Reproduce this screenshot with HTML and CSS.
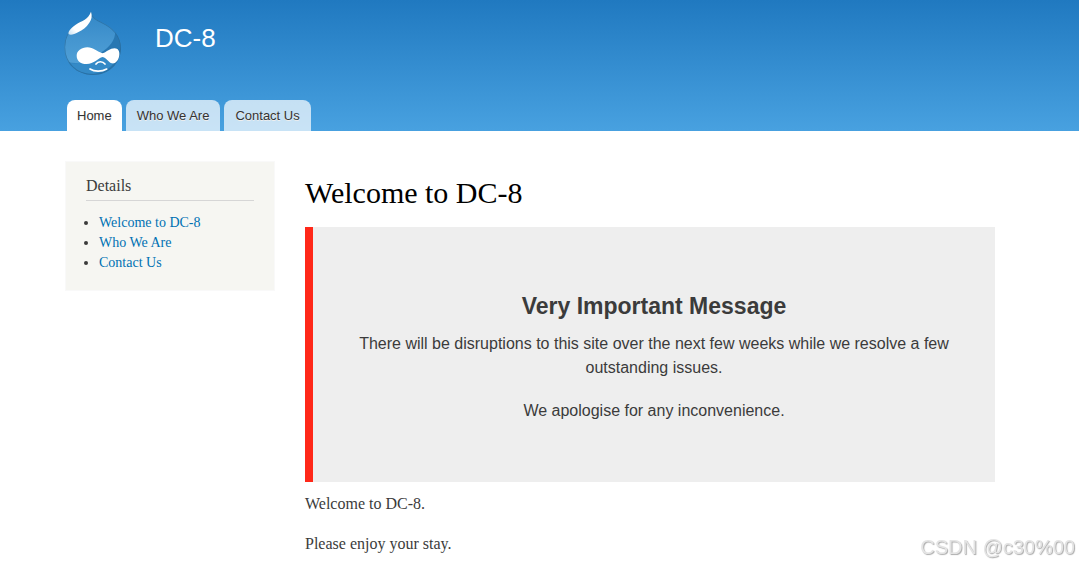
FILE: index.html
```html
<!DOCTYPE html>
<html lang="en">
<head>
    <meta charset="UTF-8">
    <meta name="viewport" content="width=device-width, initial-scale=1.0">
    <title>Welcome to DC-8 | DC-8</title>
    <link rel="stylesheet" href="styles.css">
</head>
<body>

<header class="header">
    <div class="container">
        <div class="branding">
            <a class="logo" href="#" aria-label="Home">
                <svg width="60" height="68" viewBox="39 30 180 204">
                    <defs>
                        <linearGradient id="drop" x1="0" y1="0" x2="0" y2="1">
                            <stop offset="0" stop-color="#3186c6"/>
                            <stop offset="0.45" stop-color="#4596d0"/>
                            <stop offset="1" stop-color="#56a5da"/>
                        </linearGradient>
                        <linearGradient id="shine" x1="1" y1="0" x2="0" y2="1">
                            <stop offset="0" stop-color="#fff"/>
                            <stop offset="0.75" stop-color="#fff"/>
                            <stop offset="1" stop-color="#c5dff2"/>
                        </linearGradient>
                        <clipPath id="drop-shape">
                            <path d="M123 34C126 52 140 60 158 68C188 82 213 108 213 144C213 192 174 225 129 225C80 225 43 190 43 142C43 114 56 88 78 73C98 60 119 56 123 34Z"/>
                        </clipPath>
                    </defs>
                    <g clip-path="url(#drop-shape)">
                        <rect x="39" y="30" width="180" height="204" fill="url(#drop)"/>
                        <path d="M196 92C196 122 178 142 152 158C122 182 90 196 50 186L60 234H219V92Z" fill="#2877b2"/>
                        <path d="M50 186C70 193 96 190 118 178L160 166L190 190C178 208 158 219 129 221C90 221 62 208 50 186Z" fill="#348ac7"/>
                        <path d="M123 34C126 52 140 60 158 68C188 82 213 108 213 144C213 192 174 225 129 225C80 225 43 190 43 142C43 114 56 88 78 73C98 60 119 56 123 34Z" fill="none" stroke="#286c9e" stroke-width="5" opacity="0.75"/>
                    </g>
                    <path d="M123 35C127 48 125 58 118 68C109 82 98 90 84 97C72 104 60 107 56 102C53 95 63 84 77 74C96 62 115 58 123 35Z" fill="url(#shine)"/>
                    <path d="M112 142C130 142 142 156 158 160C170 156 180 145 194 145C204 145 209 154 208 164C207 178 198 192 186 190C176 188 170 174 158 171C144 174 132 192 110 192C90 192 80 181 80 167C80 153 94 142 112 142Z" fill="#fff"/>
                    <path d="M138 192C144 183 158 183 165 192M120 207C134 216 156 215 170 207" fill="none" stroke="#fff" stroke-width="5" stroke-linecap="round"/>
                </svg>
            </a>
            <a class="site-name" href="#">DC-8</a>
        </div>
        <nav class="tabs" aria-label="Main menu">
            <a class="tab active" href="#">Home</a>
            <a class="tab" href="#">Who We Are</a>
            <a class="tab" href="#">Contact Us</a>
        </nav>
    </div>
</header>

<div class="container columns">
    <aside class="sidebar">
        <h2>Details</h2>
        <ul>
            <li><a href="#">Welcome to DC-8</a></li>
            <li><a href="#">Who We Are</a></li>
            <li><a href="#">Contact Us</a></li>
        </ul>
    </aside>

    <main class="content">
        <h1>Welcome to DC-8</h1>
        <section class="notice">
            <h2>Very Important Message</h2>
            <p>There will be disruptions to this site over the next few weeks while we resolve a few outstanding issues.</p>
            <p>We apologise for any inconvenience.</p>
        </section>
        <p>Welcome to DC-8.</p>
        <p>Please enjoy your stay.</p>
    </main>
</div>

<div class="watermark">CSDN @c30%00</div>

</body>
</html>
```

FILE: styles.css
```css
* {
    box-sizing: border-box;
}
body {
    margin: 0;
    background: #fff;
    color: #3b3b3b;
    font-family: Georgia, "Liberation Serif", serif;
    font-size: 16px;
    line-height: 24px;
}
h1, h2, p, ul {
    margin: 0;
    padding: 0;
    font-weight: normal;
}
a {
    color: #0071b3;
    text-decoration: none;
}
.header {
    padding-right: 19px;
    background: linear-gradient(#2079c0, #48a1e0);
    font-family: "Liberation Sans", Arial, sans-serif;
}
.container {
    max-width: 960px;
    margin: 0 auto;
    padding: 0 15px;
}
.branding {
    display: flex;
    gap: 32px;
    height: 100px;
    padding-top: 10px;
}
.logo {
    margin-left: -2px;
}
.logo svg {
    display: block;
}
.site-name {
    padding-top: 12px;
    color: #fff;
    font-size: 26px;
    line-height: 32px;
}
.tabs {
    display: flex;
    gap: 4px;
    padding-left: 2px;
}
.tab {
    padding: 0 11px;
    border-radius: 8px 8px 0 0;
    background: rgba(255, 255, 255, 0.7);
    color: #333;
    font-size: 13px;
    line-height: 31px;
    text-shadow: 0 1px #eee;
}
.tab.active {
    padding: 0 10px;
    background: #fff;
}

/* two columns below the header */
.columns {
    display: flex;
    align-items: flex-start;
    gap: 30px;
    max-width: 979px;
    padding-top: 30px;
    padding-right: 34px;
}
.sidebar {
    flex: 0 0 210px;
    padding: 15px 20px 17px;
    border: 1px solid #f9f9f9;
    background: #f6f6f2;
    font-size: 14px;
    line-height: 20px;
}
.sidebar h2 {
    margin-bottom: 12px;
    padding-bottom: 5px;
    border-bottom: 1px solid #d6d6d6;
    font-size: 16px;
    line-height: 18px;
}
.sidebar ul {
    padding-left: 13px;
}
.content {
    flex: 1;
    min-width: 0;
}
.content h1 {
    margin: 14px 0 16px;
    color: #000;
    font-size: 30px;
    line-height: 36px;
}
.content > p {
    margin: 10px 0 16px;
}
.notice {
    padding: 63px 40px 59px;
    border-left: 8px solid #ff2819;
    background: #eee;
    font-family: "Liberation Sans", Arial, sans-serif;
    text-align: center;
}
.notice h2 {
    margin-bottom: 10px;
    font-size: 23px;
    font-weight: bold;
    line-height: 32px;
}
.notice p + p {
    margin-top: 19px;
}
.watermark {
    position: fixed;
    right: 4px;
    bottom: 5px;
    color: #e4e4e4;
    font-family: "Liberation Sans", Arial, sans-serif;
    font-size: 20px;
    text-shadow: 1px 1px 1px #aaa;
}
```
